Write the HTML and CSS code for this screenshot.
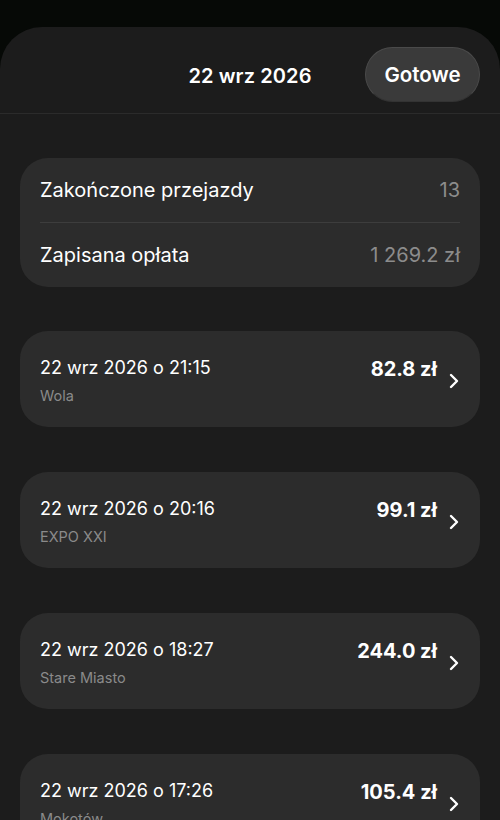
FILE: index.html
```html
<!DOCTYPE html>
<html lang="pl">
<head>
<meta charset="utf-8">
<link rel="stylesheet" href="styles.css">
</head>
<body>
<div class="sheet">
  <header class="header">
    <div class="title">22 wrz 2026</div>
    <button class="done">Gotowe</button>
  </header>
  <main class="content">
    <section class="summary">
      <div class="row"><span class="label">Zakończone przejazdy</span><span class="value">13</span></div>
      <div class="divider"></div>
      <div class="row"><span class="label">Zapisana opłata</span><span class="value">1 269.2 zł</span></div>
    </section>
    <section class="rides">
      <div class="ride">
        <div class="ride-text"><div class="ride-title">22 wrz 2026 o 21:15</div><div class="ride-sub">Wola</div></div>
        <div class="amount">82.8 zł</div>
        <svg class="chev" viewBox="0 0 10 16"><path d="M2 2l6 6-6 6" fill="none" stroke="#fff" stroke-width="2.4" stroke-linecap="round" stroke-linejoin="round"/></svg>
      </div>
      <div class="ride">
        <div class="ride-text"><div class="ride-title">22 wrz 2026 o 20:16</div><div class="ride-sub">EXPO XXI</div></div>
        <div class="amount">99.1 zł</div>
        <svg class="chev" viewBox="0 0 10 16"><path d="M2 2l6 6-6 6" fill="none" stroke="#fff" stroke-width="2.4" stroke-linecap="round" stroke-linejoin="round"/></svg>
      </div>
      <div class="ride">
        <div class="ride-text"><div class="ride-title">22 wrz 2026 o 18:27</div><div class="ride-sub">Stare Miasto</div></div>
        <div class="amount">244.0 zł</div>
        <svg class="chev" viewBox="0 0 10 16"><path d="M2 2l6 6-6 6" fill="none" stroke="#fff" stroke-width="2.4" stroke-linecap="round" stroke-linejoin="round"/></svg>
      </div>
      <div class="ride">
        <div class="ride-text"><div class="ride-title">22 wrz 2026 o 17:26</div><div class="ride-sub">Mokotów</div></div>
        <div class="amount">105.4 zł</div>
        <svg class="chev" viewBox="0 0 10 16"><path d="M2 2l6 6-6 6" fill="none" stroke="#fff" stroke-width="2.4" stroke-linecap="round" stroke-linejoin="round"/></svg>
      </div>
    </section>
  </main>
</div>
</body>
</html>
```
FILE: styles.css
```css
html, body {
  margin: 0;
  padding: 0;
  background: #060906;
  height: 820px;
  overflow: hidden;
  font-family: Inter, "Noto Sans", sans-serif;
  color: #fff;
}
.sheet {
  margin-top: 27px;
  background: #1c1c1c;
  border-radius: 42px 42px 0 0;
  height: 793px;
  overflow: hidden;
}
.header {
  height: 87px;
  box-sizing: border-box;
  padding-top: 11px;
  display: flex;
  align-items: center;
  justify-content: center;
  position: relative;
  border-bottom: 1px solid #2b2b2b;
}
.title {
  font-size: 20px;
  font-weight: 600;
  letter-spacing: 0.1px;
}
.done {
  position: absolute;
  right: 20px;
  top: 20px;
  width: 115px;
  height: 55px;
  border-radius: 28px;
  background: #3a3a3a;
  border: 1px solid #4a4a4a;
  border-bottom-color: #333;
  color: #fff;
  font-family: inherit;
  font-size: 20.5px;
  font-weight: 600;
  padding: 0;
}
.content {
  padding: 44px 20px 0;
}
.summary {
  background: #2c2c2c;
  border-radius: 28px;
  padding: 0 20px;
}
.row {
  display: flex;
  justify-content: space-between;
  align-items: center;
  height: 64px;
}
.label {
  font-size: 20px;
}
.value {
  font-size: 20px;
  color: #8c8c8c;
}
.divider {
  height: 1px;
  background: #3d3d3d;
}
.rides {
  margin-top: 44px;
  display: flex;
  flex-direction: column;
  gap: 45px;
}
.ride {
  background: #2c2c2c;
  border-radius: 28px;
  height: 96px;
  display: flex;
  align-items: center;
  padding: 2px 21px 0 20px;
  box-sizing: border-box;
}
.ride-text {
  flex: 1;
}
.ride-title {
  font-size: 18px;
  line-height: 22px;
}
.ride-sub {
  font-size: 14.5px;
  color: #8a8a8a;
  margin-top: 8px;
}
.amount {
  font-size: 20px;
  font-weight: 700;
  align-self: flex-start;
  margin-top: 24px;
}
.chev {
  width: 10px;
  height: 16px;
  margin-left: 12px;
  margin-top: 2px;
}
```
